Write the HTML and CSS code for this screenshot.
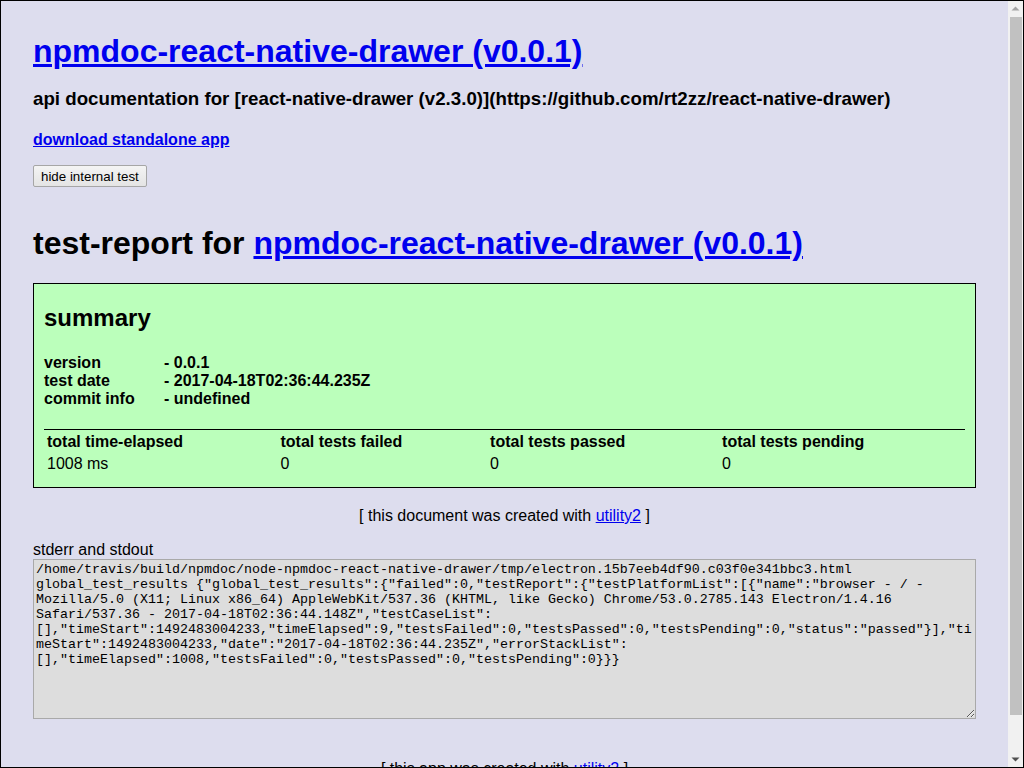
FILE: index.html
```html
<!DOCTYPE html>
<html lang="en">
<head>
<meta charset="utf-8">
<title>npmdoc-react-native-drawer (v0.0.1)</title>
<link rel="stylesheet" href="styles.css">
</head>
<body>
<div class="page">
  <h1 class="title"><a href="#">npmdoc-react-native-drawer (v0.0.1)</a></h1>
  <h3 class="subtitle">api documentation for [react-native-drawer (v2.3.0)](https://github.com/rt2zz/react-native-drawer)</h3>
  <h4 class="download"><a href="#">download standalone app</a></h4>
  <button class="toggle-btn" type="button">hide internal test</button>
  <div class="test-report">
    <h1 class="report-title">test-report for <a href="#">npmdoc-react-native-drawer (v0.0.1)</a></h1>
    <div class="summary">
      <h2 class="summary-title">summary</h2>
      <h4 class="summary-info">
        <span class="summary-label">version</span>- 0.0.1<br>
        <span class="summary-label">test date</span>- 2017-04-18T02:36:44.235Z<br>
        <span class="summary-label">commit info</span>- undefined
      </h4>
      <table class="summary-table">
        <thead>
          <tr><th>total time-elapsed</th><th>total tests failed</th><th>total tests passed</th><th>total tests pending</th></tr>
        </thead>
        <tbody>
          <tr><td>1008 ms</td><td>0</td><td>0</td><td>0</td></tr>
        </tbody>
      </table>
    </div>
    <div class="credit">[ this document was created with <a href="#">utility2</a> ]</div>
    <div class="log-label">stderr and stdout</div>
    <textarea class="log" readonly>/home/travis/build/npmdoc/node-npmdoc-react-native-drawer/tmp/electron.15b7eeb4df90.c03f0e341bbc3.html
global_test_results {"global_test_results":{"failed":0,"testReport":{"testPlatformList":[{"name":"browser - / - Mozilla/5.0 (X11; Linux x86_64) AppleWebKit/537.36 (KHTML, like Gecko) Chrome/53.0.2785.143 Electron/1.4.16 Safari/537.36 - 2017-04-18T02:36:44.148Z","testCaseList":[],"timeStart":1492483004233,"timeElapsed":9,"testsFailed":0,"testsPassed":0,"testsPending":0,"status":"passed"}],"timeStart":1492483004233,"date":"2017-04-18T02:36:44.235Z","errorStackList":[],"timeElapsed":1008,"testsFailed":0,"testsPassed":0,"testsPending":0}}}
</textarea>
  </div>
  <div class="app-credit">[ this app was created with <a href="#">utility2</a> ]</div>
</div>
<div class="scrollbar" aria-hidden="true">
  <div class="sb-btn"><svg width="15" height="15" viewBox="0 0 15 15"><path d="M3.5 9.5h8L7.5 5.5z" fill="#a3a3a3"/></svg></div>
  <div class="sb-track"><div class="sb-thumb"></div></div>
  <div class="sb-btn"><svg width="15" height="15" viewBox="0 0 15 15"><path d="M3.5 5.5h8L7.5 9.5z" fill="#505050"/></svg></div>
</div>
</body>
</html>
```

FILE: styles.css
```css
html {
  height: 100%;
  overflow: hidden;
}

body {
  box-sizing: border-box;
  height: 100%;
  margin: 0;
  display: flex;
  border: 1px solid #000;
  overflow: hidden;
  background: #dde;
  color: #000;
  font-family: "Liberation Sans", Arial, sans-serif;
  font-size: 16px;
}

.page {
  flex: 1;
  min-width: 0;
  overflow: hidden;
  padding: 11px 32px 30px 32px;
}

a {
  color: #00e;
}

.title {
  font-size: 32px;
  margin: 21px 0 18px 0;
}

.subtitle {
  font-size: 18.72px;
  margin: 18px 0;
}

.download {
  font-size: 16px;
  margin: 21px 0 16px 0;
}

.toggle-btn {
  font-family: "Liberation Sans", Arial, sans-serif;
  font-size: 13.333px;
  color: #000;
  padding: 1px 7px;
  height: 22px;
  border: 1px solid #a6a6a6;
  border-radius: 2px;
  background: linear-gradient(#f4f4f4, #e4e4e4);
}

.report-title {
  font-size: 32px;
  margin: 38px 0 21px 0;
}

.summary {
  background: #bfb;
  border: 1px solid #000;
  padding: 0 10px 11px 10px;
}

.summary-title {
  font-size: 24px;
  margin: 20px 0;
}

.summary-info {
  font-size: 16px;
  margin: 22px 0 21px 0;
}

.summary-label {
  display: inline-block;
  width: 120px;
}

.summary-table {
  width: 100%;
  border-top: 1px solid #000;
  text-align: left;
}

.summary-table th,
.summary-table td {
  padding: 1px;
}

.credit {
  text-align: center;
  margin: 19px 0 16px 0;
}

.log-label {
  margin: 0;
}

.log {
  display: block;
  box-sizing: border-box;
  width: 100%;
  height: 160px;
  margin: 0;
  padding: 2px;
  border: 1px solid #a9a9a9;
  background: #ddd;
  color: #000;
  font-family: "Liberation Mono", "Courier New", monospace;
  font-size: 13.333px;
}

.app-credit {
  text-align: center;
  margin-top: 41px;
}

.scrollbar {
  flex: 0 0 15px;
  display: flex;
  flex-direction: column;
  background: #f1f1f1;
}

.sb-btn {
  height: 15px;
  flex: 0 0 15px;
}

.sb-btn svg {
  display: block;
}

.sb-track {
  flex: 1;
  padding: 1px 1px 37px 2px;
}

.sb-thumb {
  height: 100%;
  background: #c1c1c1;
}
```
